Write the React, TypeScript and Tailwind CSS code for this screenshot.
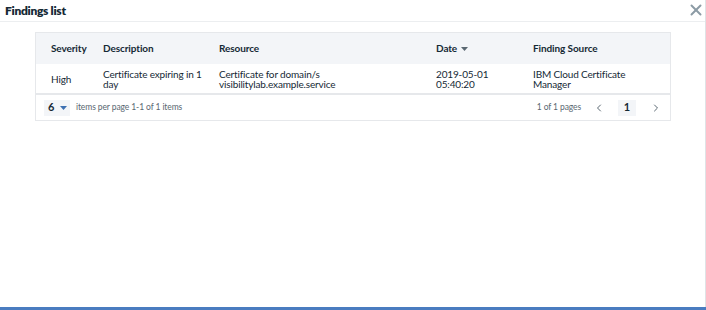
import { ChevronLeft, ChevronRight, X } from "lucide-react";

const columns = [
  { label: "Severity", width: "w-[52px]" },
  { label: "Description", width: "w-[116px]" },
  { label: "Resource", width: "w-[217px]" },
  { label: "Date", width: "w-[97px]", sort: true },
  { label: "Finding Source", width: "flex-1" },
];

const row = [
  ["High"],
  ["Certificate expiring in 1", "day"],
  ["Certificate for domain/s", "visibilitylab.example.service"],
  ["2019-05-01", "05:40:20"],
  ["IBM Cloud Certificate", "Manager"],
];

function Caret({ className }: { className?: string }) {
  return (
    <svg width="7" height="4" viewBox="0 0 7 4" className={className}>
      <path d="M0 0h7L3.5 4z" fill="currentColor" />
    </svg>
  );
}

export default function App() {
  return (
    <div className="w-[706px] h-[310px] bg-white flex flex-col font-['Lato',sans-serif] text-[#152935] overflow-hidden">
      <div className="flex-1 flex flex-col border-r border-[#dfe3e6]">
        <div className="h-[22px] flex items-center justify-between border-b border-[#eceef0] pl-[5px] pr-0">
          <h2 className="text-[12px] font-extrabold tracking-[-0.3px]">Findings list</h2>
          <X size={18} strokeWidth={2.6} className="text-[#8c9ba5] -mt-[1px]" />
        </div>

        <div className="mt-[10px] ml-[35px] w-[636px] border border-[#e6e8eb]">
          <div className="h-[31px] bg-[#f3f5f8] flex items-center text-[10px] font-bold tracking-[-0.1px]">
            {columns.map((c) => (
              <div
                key={c.label}
                className={`${c.width} flex-none pl-[15px] flex items-center gap-[4px] whitespace-nowrap`}
              >
                {c.label}
                {c.sort && <Caret className="text-[#5a6872]" />}
              </div>
            ))}
          </div>
          <div className="h-[31px] flex items-center text-[10px] leading-[10px] tracking-[-0.15px] border-b-2 border-[#e6e8eb] pt-[1px]">
            {row.map((lines, i) => (
              <div key={i} className={`${columns[i].width} flex-none pl-[15px] whitespace-nowrap`}>
                {lines.map((l) => (
                  <div key={l} className="h-[10px]">{l}</div>
                ))}
              </div>
            ))}
          </div>
          <div className="h-[25px] flex items-center text-[8.5px] tracking-[-0.1px] text-[#5a6872]">
            <div className="ml-[8px] h-[16px] w-[26px] bg-[#f3f5f8] flex items-center gap-[6px] pl-[4px]">
              <span className="text-[11px] font-bold text-[#152935]">6</span>
              <Caret className="text-[#3d70b2]" />
            </div>
            <span className="ml-[6px]">items per page 1-1 of 1 items</span>
            <span className="ml-auto">1 of 1 pages</span>
            <ChevronLeft size={12} strokeWidth={2} className="ml-[12px] text-[#5a6872]" />
            <div className="ml-[13px] h-[16px] w-[18px] bg-[#f3f5f8] flex items-center justify-center text-[11px] font-bold text-[#152935]">
              1
            </div>
            <ChevronRight size={12} strokeWidth={2} className="ml-[14px] mr-[8px] text-[#5a6872]" />
          </div>
        </div>
      </div>
      <div className="h-[3px] bg-[#4a7cc0]" />
    </div>
  );
}
